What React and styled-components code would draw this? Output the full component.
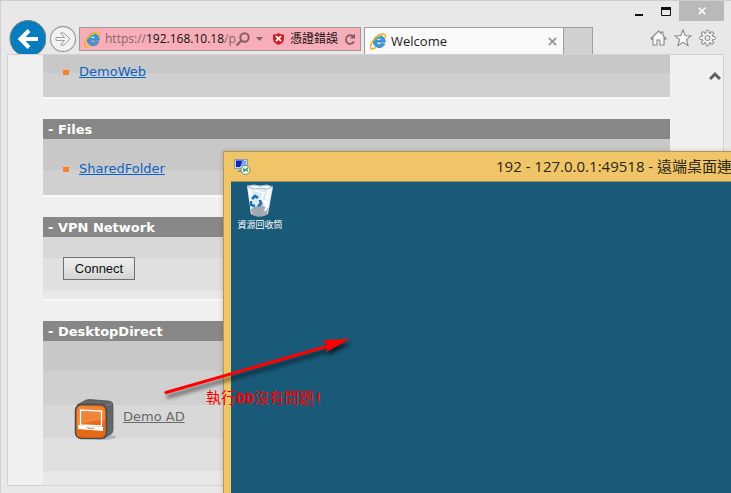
import React from "react";
import styled, { createGlobalStyle } from "styled-components";

const uiFont = `"Open Sans", "Noto Sans CJK TC", sans-serif`;
const pageFont = `"DejaVu Sans", "Noto Sans CJK TC", sans-serif`;

const GlobalStyle = createGlobalStyle`
  *, *::before, *::after { box-sizing: border-box; }
  body { margin: 0; background: #e8e8e8; }
  button, input { font: inherit; margin: 0; }
  svg { display: block; flex: none; }
`;

const Desktop = styled.div`
  position: relative;
  height: 100vh;
  overflow: hidden;
`;

const Browser = styled.div`
  display: flex;
  flex-direction: column;
  height: 100%;
  padding: 0 7px 7px 6px;
  background: #e8e8e8;
  border-top: 1px solid #cdcdcd;
  border-left: 1px solid #cfcfcf;
  font-family: ${uiFont};
`;

const TitleBar = styled.div`
  display: flex;
  justify-content: flex-end;
  flex: none;
  height: 19px;
`;

const CaptionButton = styled.button`
  display: grid;
  place-items: center;
  width: ${(p) => (p.$close ? 45 : 27)}px;
  height: 20px;
  padding: 0;
  border: 0;
  background: ${(p) => (p.$close ? "#b9b9b9" : "transparent")};
`;

const Toolbar = styled.div`
  display: flex;
  align-items: flex-start;
  flex: none;
  height: 34px;
  padding-left: 1px;
  overflow: hidden;
`;

const IconButton = styled.button`
  flex: none;
  display: grid;
  place-items: center;
  padding: 0;
  border: 0;
  background: none;
`;

const ForwardButton = styled(IconButton)`
  margin: 5px 2px 0 3px;
`;

const AddressBar = styled.div`
  display: flex;
  align-items: center;
  flex: 272 1 0;
  min-width: 0;
  height: 24px;
  margin: 7px 3px 0 0;
  padding: 0 4px;
  border: 1px solid #a3999b;
  background: #f8aeb8;
  line-height: 20px;
  color: #111;
  white-space: nowrap;
`;

const Url = styled.span`
  flex: 1;
  margin-left: 4px;
  font-size: 12px;
  color: #85656a;

  b {
    font-weight: 400;
    color: #111;
  }
`;

const AddressTools = styled.div`
  display: flex;
  align-items: center;
  flex: none;
  gap: 6px;
`;

const Certificate = styled.div`
  display: flex;
  align-items: center;
  gap: 6px;
  margin-left: 4px;
  font-size: 12px;
`;

const Tab = styled.div`
  display: flex;
  align-items: center;
  flex: 187 1 0;
  min-width: 0;
  height: 27px;
  margin-top: 7px;
  padding: 0 6px 0 5px;
  gap: 4px;
  border: 1px solid #a0a0a0;
  border-bottom: 0;
  background: #f9f9f9;
  font-size: 13px;
  color: #222;

  span {
    flex: 1;
  }
`;

const NewTab = styled.button`
  flex: none;
  width: 29px;
  height: 27px;
  margin-top: 7px;
  border: 1px solid #a0a0a0;
  border-width: 1px 1px 0 0;
  background: #d0d0d0;
`;

const CommandBar = styled.div`
  display: flex;
  flex: none;
  gap: 7px;
  margin: 9px 8px 0 57px;
`;

const Viewport = styled.div`
  display: flex;
  flex: 1;
  min-height: 0;
  overflow: hidden;
  border: 1px solid #d3d3d3;
  background: #f0f0f0;
`;

const Page = styled.main`
  display: flex;
  flex-direction: column;
  flex: 1;
  gap: 20px;
  padding-left: 35px;
  font: 13px/16px ${pageFont};
`;

const ScrollTrack = styled.div`
  flex: none;
  width: 53px;
  padding: 16px 2px 0 0;
  display: flex;
  justify-content: flex-end;
  align-items: flex-start;
`;

const Panel = styled.section`
  flex: none;
  border-bottom: 2px solid #f8f8f8;
`;

const PanelHeader = styled.h2`
  height: 20px;
  margin: 0;
  padding: 1px 5px;
  background: #878787;
  color: #fff;
  font-size: 13px;
  line-height: 20px;
`;

const fades = {
  links: "#c8c8c8 31px, #d0d0d0 31px",
  first: "#c8c8c8 18px, #d0d0d0 18px",
  connect: "#d8d8d8 21px, #e0e0e0 21px 54px, #e8e8e8 54px",
  desktop:
    "#c8c8c8 30px, #d0d0d0 30px 64px, #d8d8d8 64px 97px, #e0e0e0 97px 130px, #e8e8e8 130px",
};

const PanelBody = styled.div`
  display: flex;
  align-items: center;
  padding: ${(p) => p.$pad};
  background: linear-gradient(${(p) => fades[p.$fade]});
`;

const Bullet = styled.i`
  width: 6px;
  height: 6px;
  margin-right: 10px;
  background: #f58233;
  border-top: 1px solid #f9b78a;
`;

const PageLink = styled.a`
  color: #0c62c4;
  text-decoration: underline;
`;

const DemoLink = styled(PageLink)`
  margin: 0 0 6px 6px;
  color: #696969;
`;

const ConnectButton = styled.button`
  width: 72px;
  height: 23px;
  padding: 0;
  border: 1px solid #707070;
  background: linear-gradient(#efefef, #e2e2e2 50%, #d4d4d4);
  color: #111;
  font: 13px "Liberation Sans", sans-serif;
`;

const RemoteWindow = styled.section`
  position: absolute;
  top: 151px;
  left: 223px;
  right: 0;
  bottom: 0;
  display: flex;
  flex-direction: column;
  padding-left: 7px;
  overflow: hidden;
  border: 1px solid #b59755;
  border-width: 1px 0 0 1px;
  background: #efc567;
  box-shadow: 0 0 5px rgba(0, 0, 0, 0.18);
`;

const RemoteTitle = styled.header`
  display: flex;
  align-items: center;
  flex: none;
  height: 29px;
  padding-left: 3px;
  font: 15px/20px ${uiFont};
  color: #2b261c;
  white-space: nowrap;

  h1 {
    margin: 0 0 2px 245px;
    font: inherit;
  }
`;

const RemoteDesktop = styled.div`
  flex: 1;
  border-top: 1px solid #9d8c5d;
  background: #195a79;
`;

const DesktopIcon = styled.button`
  display: flex;
  flex-direction: column;
  align-items: center;
  width: 58px;
  padding: 2px 0 0;
  border: 0;
  background: none;
  color: #fff;
  font: 9px/14px "Noto Sans CJK TC", sans-serif;
`;

const Annotation = styled.div`
  position: absolute;
  top: 330px;
  left: 160px;
  color: #f00;
  pointer-events: none;
`;

const AnnotationText = styled.p`
  margin: 0 0 0 46px;
  font: 15px/20px "Liberation Mono", "Noto Sans CJK TC", monospace;
  white-space: nowrap;
`;

const IeLogo = ({ size = 17 }) => (
  <svg width={size} height={size} viewBox="0 0 17 17" fill="none">
    <path d="M14.8 11a6 6 0 1 1 .3-3.8c.2.7.2 1.3.2 2H6.2c.2 2.3 3.7 3 4.8 1.2z" fill="#3d9cd8" stroke="#1c6caa" strokeWidth=".6" />
    <path d="M6.3 7.3c.3-2.2 4.5-2.4 4.8 0z" fill="#e6f5fc" stroke="#1c6caa" strokeWidth=".4" />
    <path d="M4.2 5.4C5.6 3.6 8 3 10 3.4" stroke="#9bdaf5" />
    <path d="M15 5.2C17.6-1 9.2.4 5 5.3.2 10-.9 16.5 2.2 16c1.2-.1 2.7-1 3.6-1.7" stroke="#edb529" strokeWidth="1.6" />
  </svg>
);

const BackIcon = () => (
  <svg width="38" height="36" viewBox="0 0 38 36">
    <circle cx="20" cy="18.500" r="18" fill="#087dbd" stroke="#777f85" />
    <path d="M30 19H13M21 10.500 12.500 19l8.500 8.500" fill="none" stroke="#fff" strokeWidth="4" />
  </svg>
);

const ForwardIcon = () => (
  <svg width="28" height="28" viewBox="0 0 28 28" fill="#f2f2f2" stroke="#a0a0a0">
    <circle cx="14" cy="14" r="12.500" strokeWidth="1.300" />
    <path d="M7 12.500h8.500l-4-4.500H15l6 6-6 6h-3.500l4-4.500H7z" />
  </svg>
);

const SearchIcon = () => (
  <svg width="14" height="14" viewBox="0 0 14 14" fill="none" stroke="#806067" strokeWidth="2">
    <circle cx="8.500" cy="5.500" r="4.200" />
    <path d="m5.500 8.500-5 5" />
  </svg>
);

const CaretIcon = () => (
  <svg width="7" height="4" viewBox="0 0 7 4"><path d="M0 0h7L3.500 4z" fill="#806067" /></svg>
);

const ShieldIcon = () => (
  <svg width="11" height="12" viewBox="0 0 11 12">
    <path d="M0 1.500C2 1.500 4 1 5.500 0 7 1 9 1.500 11 1.500V6c0 3-2.500 5-5.500 6C2.500 11 0 9 0 6z" fill="#cb2028" />
    <path d="m3 3.200 5 5m0-5-5 5" stroke="#fff" strokeWidth="1.700" />
  </svg>
);

const RefreshIcon = () => (
  <svg width="12" height="13" viewBox="0 0 12 13" fill="none">
    <path d="M9.300 3.600A4.300 4.300 0 1 0 10 8.500" stroke="#806067" strokeWidth="1.800" />
    <path d="M11 .5v5H6z" fill="#806067" />
  </svg>
);

const CrossIcon = ({ color = "#999", size = 8 }) => (
  <svg width={size} height={size} viewBox="0 0 8 8"><path d="m.7.7 6.600 6.600m0-6.600L.7 7.300" stroke={color} strokeWidth="1.600" /></svg>
);

const HomeIcon = () => (
  <svg width="17" height="18" viewBox="0 0 17 18" fill="#f8f8f8" stroke="#8a8a8a" strokeWidth="1.100">
    <path d="M1 9.500 8.500 2l2.500 2.500V3h2v3.500l3 3-1 1-1-1V16h-4v-5H7v5H3V9.500l-1 1z" />
  </svg>
);

const StarIcon = () => (
  <svg width="18" height="18" viewBox="0 0 18 18" fill="#f8f8f8" stroke="#8a8a8a" strokeWidth="1.100">
    <path d="m9 1 2.200 5.500 5.800.4-4.500 3.800L14 16.500l-5-3.200-5 3.200 1.500-5.800L1 6.900l5.800-.4z" />
  </svg>
);

const GearIcon = () => {
  const teeth = Array.from({ length: 8 }, (_, i) => i * 45);
  return (
    <svg width="17" height="18" viewBox="0 0 17 18" stroke="#8a8a8a">
      {teeth.map((a) => (
        <rect key={a} x="7" y="1.200" width="3" height="4" rx=".7" fill="#f4f4f4" transform={`rotate(${a} 8.500 9)`} />
      ))}
      <circle cx="8.500" cy="9" r="5.300" fill="#f4f4f4" stroke="none" />
      <path d="M5.400 4.500 7 3.800m3 0 1.600.7m1.400 1.400.7 1.600m0 3-.7 1.600M11.600 13.500l-1.600.7m-3 0-1.600-.7M4 12.100l-.7-1.600m0-3L4 5.900" fill="none" />
      <circle cx="8.500" cy="9" r="2.600" fill="#e8e8e8" />
    </svg>
  );
};

const DemoIcon = () => (
  <svg width="43" height="42" viewBox="0 0 43 42">
    <ellipse cx="29" cy="38" rx="13" ry="3" fill="#9ba9b6" opacity=".65" />
    <path d="M3 6 11 1.500q2-1 5-.9l19 1.500q4 .4 4 4V31q0 3-3 4.500l-6 4z" fill="#62676a" stroke="#494d50" strokeWidth=".7" />
    <path d="m30 8 8-4M32 38V11" stroke="#898d90" strokeWidth=".7" />
    <rect x="1.500" y="5.500" width="31" height="34" rx="6" fill="#e56a17" stroke="#47494b" strokeWidth="1.500" />
    <path d="M3 12q0-5 5-5l18 1q5 0 5 5v8q-13 0-28 6z" fill="#f39449" opacity=".65" />
    <path d="M6.500 11v15L27.500 27V12z" fill="none" stroke="#fff" strokeWidth="1.300" />
    <path d="m4 26 25 2v4L4 30z" fill="#fff" />
    <path d="m12 28 10 1-3 1h-5z" fill="#ee9d76" />
  </svg>
);

const RemoteIcon = () => (
  <svg width="17" height="17" viewBox="0 0 17 17">
    <rect x=".5" y="1.500" width="13" height="9" fill="#c5d5e6" stroke="#8d9dac" />
    <path d="M2 2.500h8L6 9H2z" fill="#0b25c1" />
    <path d="M8 3h4v5H7z" fill="#7cacea" />
    <path d="M4 13h8" stroke="#8798a7" strokeWidth="2" />
    <circle cx="11.500" cy="12" r="4.500" fill="#f6faf2" stroke="#79897a" />
    <path d="m9 10.500 2 1.700-2 1.600m5-4-2 1.700 2 1.700" fill="none" stroke="#219544" strokeWidth="1.300" />
  </svg>
);

const RecycleBin = () => (
  <svg width="28" height="34" viewBox="0 0 28 34">
    <path d="M1 2.500 5 30q8 5 17 0l5-27z" fill="#dbe6ee" />
    <path d="m21 4 5-1-5 27-5 2zM2 4l4 2 3 25-4-1z" fill="#fff" opacity=".75" />
    <path d="M5 25q8-6 17-1l-1 7q-8 3-15 0z" fill="#8e9297" opacity=".75" />
    <path d="m8 6 10 3-3 6 7 5-3 7" fill="none" stroke="#f9fcff" strokeWidth="2" />
    <path d="M1 2 8 1l6 1 7-1 6 2-6 2-6-1-7 1z" fill="#f9fcff" stroke="#a9bbc8" />
    <path d="m6 15 3-3 3 2m2 2 1 4-3 2m-3 0-4-1v-4" fill="none" stroke="#1671b8" strokeWidth="2.600" />
  </svg>
);

const Arrow = () => (
  <svg width="200" height="60" viewBox="0 0 200 60" overflow="visible">
    <defs>
      <filter id="arrow-shadow" x="-10%" y="-20%" width="120%" height="160%">
        <feDropShadow dx="2" dy="4" stdDeviation="2" floodColor="#000" floodOpacity=".65" />
      </filter>
    </defs>
    <g filter="url(#arrow-shadow)">
      <path d="M6 62.500 168 16" stroke="#f00" strokeWidth="3" strokeLinecap="round" />
      <path d="m163 10 27-1-24 13 2-6z" fill="#f00" />
    </g>
  </svg>
);

const Heading = ({ children }) => (
  <PanelHeader>- {children}</PanelHeader>
);

export default function App() {
  return (
    <>
      <GlobalStyle />
      <Desktop>
        <Browser>
          <TitleBar>
            <CaptionButton aria-label="Minimize">
              <svg width="8" height="10"><path d="M0 9h8" stroke="#111" strokeWidth="2" /></svg>
            </CaptionButton>
            <CaptionButton aria-label="Maximize">
              <svg width="10" height="9"><path d="M.5 1v7.500h9V1" fill="none" stroke="#111" /><path d="M0 1.500h10" stroke="#111" strokeWidth="3" /></svg>
            </CaptionButton>
            <CaptionButton $close aria-label="Close">
              <CrossIcon color="#fff" />
            </CaptionButton>
          </TitleBar>
          <Toolbar>
            <IconButton aria-label="Back"><BackIcon /></IconButton>
            <ForwardButton aria-label="Forward"><ForwardIcon /></ForwardButton>
            <AddressBar>
              <IeLogo />
              <Url>https://<b>192.168.10.18</b>/p</Url>
              <AddressTools>
                <IconButton aria-label="Search"><SearchIcon /></IconButton>
                <CaretIcon />
                <Certificate>
                  <ShieldIcon />
                  憑證錯誤
                </Certificate>
                <IconButton aria-label="Refresh"><RefreshIcon /></IconButton>
              </AddressTools>
            </AddressBar>
            <Tab>
              <IeLogo />
              <span>Welcome</span>
              <IconButton aria-label="Close tab"><CrossIcon size={9} /></IconButton>
            </Tab>
            <NewTab aria-label="New tab" />
            <CommandBar>
              <IconButton aria-label="Home"><HomeIcon /></IconButton>
              <IconButton aria-label="Favorites"><StarIcon /></IconButton>
              <IconButton aria-label="Tools"><GearIcon /></IconButton>
            </CommandBar>
          </Toolbar>
          <Viewport>
            <Page>
              <Panel>
                <PanelBody $pad="9px 20px 17px" $fade="first">
                  <Bullet /><PageLink href="#web">DemoWeb</PageLink>
                </PanelBody>
              </Panel>
              <Panel>
                <Heading>Files</Heading>
                <PanelBody $pad="22px 20px 18px" $fade="links">
                  <Bullet /><PageLink href="#files">SharedFolder</PageLink>
                </PanelBody>
              </Panel>
              <Panel>
                <Heading>VPN Network</Heading>
                <PanelBody $pad="20px 20px 19px" $fade="connect">
                  <ConnectButton>Connect</ConnectButton>
                </PanelBody>
              </Panel>
              <Panel>
                <Heading>DesktopDirect</Heading>
                <PanelBody $pad="58px 31px 60px" $fade="desktop">
                  <DemoIcon />
                  <DemoLink href="#demo">Demo AD</DemoLink>
                </PanelBody>
              </Panel>
            </Page>
            <ScrollTrack>
              <IconButton aria-label="Scroll up">
                <svg width="12" height="10" viewBox="0 0 12 10"><path d="m1 8 5-5 5 5" fill="none" stroke="#5e5e5e" strokeWidth="3" /></svg>
              </IconButton>
            </ScrollTrack>
          </Viewport>
        </Browser>
        <RemoteWindow>
          <RemoteTitle>
            <RemoteIcon />
            <h1>192 - 127.0.0.1:49518 - 遠端桌面連</h1>
          </RemoteTitle>
          <RemoteDesktop>
            <DesktopIcon><RecycleBin />資源回收筒</DesktopIcon>
          </RemoteDesktop>
        </RemoteWindow>
        <Annotation>
          <Arrow />
          <AnnotationText>執行<b>DD</b>沒有問題<b>!</b></AnnotationText>
        </Annotation>
      </Desktop>
    </>
  );
}
